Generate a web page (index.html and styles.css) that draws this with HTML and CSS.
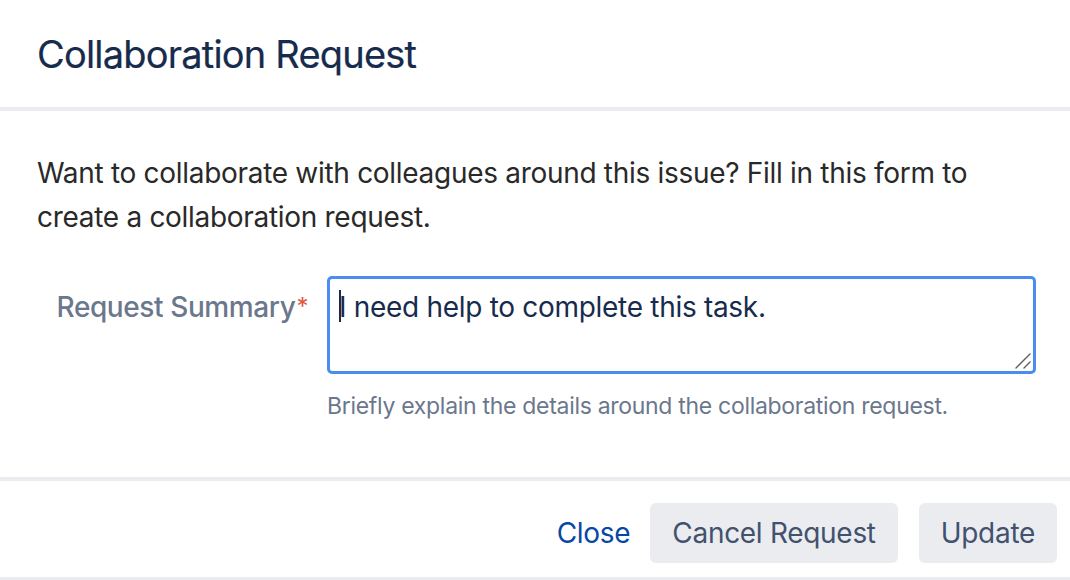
FILE: index.html
```html
<!DOCTYPE html>
<html lang="en">
<head>
<meta charset="utf-8">
<title>Collaboration Request</title>
<link rel="stylesheet" href="styles.css">
</head>
<body>
<div class="dialog">
  <header class="dialog-header">
    <h1 class="dialog-title">Collaboration Request</h1>
  </header>
  <section class="dialog-body">
    <p class="intro">Want to collaborate with colleagues around this issue? Fill in this form to create a collaboration request.</p>
    <div class="field-row">
      <label class="field-label" for="summary">Request Summary<span class="req">*</span></label>
      <div class="field-control">
        <div class="textarea-wrap">
          <textarea id="summary" class="textarea">I need help to complete this task.</textarea>
          <span class="caret"></span>
          <svg class="grip" width="16" height="16" viewBox="0 0 16 16" aria-hidden="true">
            <line x1="1" y1="15" x2="15" y2="1" stroke="#5e5e5e" stroke-width="1.4" stroke-linecap="round"/>
            <line x1="9" y1="15" x2="15" y2="9" stroke="#5e5e5e" stroke-width="1.4" stroke-linecap="round"/>
          </svg>
        </div>
        <div class="help">Briefly explain the details around the collaboration request.</div>
      </div>
    </div>
  </section>
  <footer class="dialog-footer">
    <a class="link-btn" href="#">Close</a>
    <button class="btn" type="button">Cancel Request</button>
    <button class="btn" type="button">Update</button>
  </footer>
</div>
</body>
</html>
```

FILE: styles.css
```css
html, body {
  margin: 0;
  padding: 0;
  background: #ffffff;
}

body {
  font-family: Inter, "Noto Sans", "Liberation Sans", sans-serif;
  width: 1070px;
  height: 580px;
  overflow: hidden;
}

.dialog {
  display: flex;
  flex-direction: column;
  width: 1070px;
}

.dialog-header {
  height: 107px;
  display: flex;
  align-items: center;
  padding: 0 37px;
  border-bottom: 4px solid #ebecf0;
  box-sizing: content-box;
}

.dialog-title {
  margin: 0;
  font-size: 38px;
  font-weight: 400;
  color: #172b4d;
  letter-spacing: -0.8px;
  line-height: 48px;
  -webkit-text-stroke: 0.2px #172b4d;
}

.dialog-body {
  padding: 40px 37px 55px 37px;
}

.intro {
  margin: 0;
  font-size: 28px;
  line-height: 44px;
  color: #292929;
  letter-spacing: -0.3px;
  width: 960px;
}

.field-row {
  display: flex;
  margin-top: 37px;
}

.field-label {
  width: 271px;
  flex: none;
  text-align: right;
  font-size: 28px;
  font-weight: 500;
  color: #6b778c;
  line-height: 40px;
  letter-spacing: -0.4px;
  padding-top: 11px;
  margin-right: 19px;
}

.req {
  color: #e0563a;
  font-weight: 400;
  font-size: 24px;
  vertical-align: top;
  margin-left: 1px;
}

.field-control {
  display: flex;
  flex-direction: column;
}

.textarea-wrap {
  position: relative;
  width: 709px;
  height: 98px;
}

.textarea {
  display: block;
  box-sizing: border-box;
  width: 709px;
  height: 98px;
  margin: 0;
  border: 3px solid #4a8cf0;
  border-radius: 5px;
  padding: 8px 9px;
  font-family: Inter, "Noto Sans", "Liberation Sans", sans-serif;
  font-size: 28px;
  line-height: 40px;
  letter-spacing: -0.3px;
  color: #172b4d;
  background: #ffffff;
  outline: none;
  resize: none;
}

.caret {
  position: absolute;
  left: 12px;
  top: 14px;
  width: 2px;
  height: 32px;
  background: #172b4d;
}

.grip {
  position: absolute;
  right: 5px;
  bottom: 5px;
}

.help {
  margin-top: 16px;
  font-size: 23px;
  line-height: 32px;
  letter-spacing: -0.3px;
  color: #6b778c;
}

.dialog-footer {
  display: flex;
  justify-content: flex-end;
  align-items: center;
  border-top: 4px solid #ebecf0;
  border-bottom: 3px solid #ebecf0;
  padding: 22px 13px 14px 0;
  gap: 21px;
}

.link-btn {
  font-size: 28px;
  color: #0747a6;
  text-decoration: none;
  line-height: 60px;
  letter-spacing: -0.3px;
  margin-right: -1px;
}

.btn {
  height: 60px;
  border: none;
  border-radius: 6px;
  background: #ebecf0;
  color: #42526e;
  font-family: Inter, "Noto Sans", "Liberation Sans", sans-serif;
  font-size: 28px;
  letter-spacing: -0.3px;
  padding: 0 22px;
  cursor: pointer;
}
```
